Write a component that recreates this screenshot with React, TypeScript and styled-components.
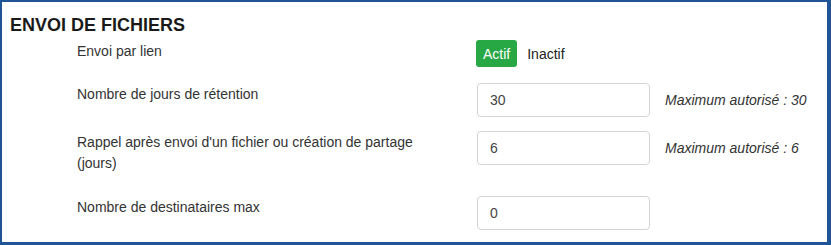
import React from "react";
import styled, { createGlobalStyle } from "styled-components";

const Global = createGlobalStyle`
  html, body { margin: 0; padding: 0; background: #ffffff; }
  body { font-family: "Liberation Sans", Arial, Helvetica, sans-serif; }
  * { box-sizing: border-box; }
`;

const Frame = styled.div`
  width: 831px;
  height: 245px;
  border-style: solid;
  border-color: #1f5596;
  border-width: 2px 4px 3px 2px;
  background: #ffffff;
  padding: 13px 0 0 8px;
  overflow: hidden;
`;

const Title = styled.h2`
  margin: 0;
  font-size: 18px;
  line-height: 20px;
  font-weight: 700;
  color: #1a1a1a;
`;

const Form = styled.div`
  display: grid;
  grid-template-columns: 400px 173px 15px auto;
  grid-template-rows: 43px 48px 65px auto;
  margin: 5px 0 0 67px;
  color: #333333;
  font-size: 14px;
`;

const Label = styled.div`
  grid-column: 1;
  line-height: 21.5px;
  padding-top: 0.5px;
  padding-right: 45px;
  color: #333333;
`;

const Controls = styled.div`
  grid-column: 2 / span 3;
  display: flex;
  align-items: center;
  align-self: start;
  gap: 10px;
`;

const ToggleButton = styled.button<{ $active?: boolean }>`
  font-family: inherit;
  font-size: 14px;
  height: 27px;
  padding: 0 ${(p) => (p.$active ? "7px" : "0")};
  margin-left: ${(p) => (p.$active ? "-1px" : "0")};
  border-radius: 3px;
  border: none;
  background: ${(p) => (p.$active ? "#28a745" : "transparent")};
  color: ${(p) => (p.$active ? "#ffffff" : "#222222")};
`;

const Input = styled.input`
  grid-column: 2;
  align-self: start;
  width: 173px;
  height: 34px;
  border: 1px solid #d0d5da;
  border-radius: 4px;
  padding: 0 12px;
  font-family: inherit;
  font-size: 14px;
  color: #444444;
  background: #ffffff;
  outline: none;
`;

const Note = styled.div`
  grid-column: 4;
  align-self: start;
  line-height: 34px;
  font-style: italic;
  color: #333333;
`;

const rows = [
  { label: "Nombre de jours de rétention", value: "30", note: "Maximum autorisé : 30" },
  {
    label: "Rappel après envoi d'un fichier ou création de partage (jours)",
    value: "6",
    note: "Maximum autorisé : 6",
  },
  { label: "Nombre de destinataires max", value: "0", note: "" },
];

export default function App() {
  return (
    <>
      <Global />
      <Frame>
        <Title>ENVOI DE FICHIERS</Title>
        <Form>
          <Label>Envoi par lien</Label>
          <Controls>
            <ToggleButton $active>Actif</ToggleButton>
            <ToggleButton>Inactif</ToggleButton>
          </Controls>
          {rows.map((r) => (
            <React.Fragment key={r.label}>
              <Label>{r.label}</Label>
              <Input defaultValue={r.value} readOnly />
              {r.note ? <Note>{r.note}</Note> : <span />}
            </React.Fragment>
          ))}
        </Form>
      </Frame>
    </>
  );
}
